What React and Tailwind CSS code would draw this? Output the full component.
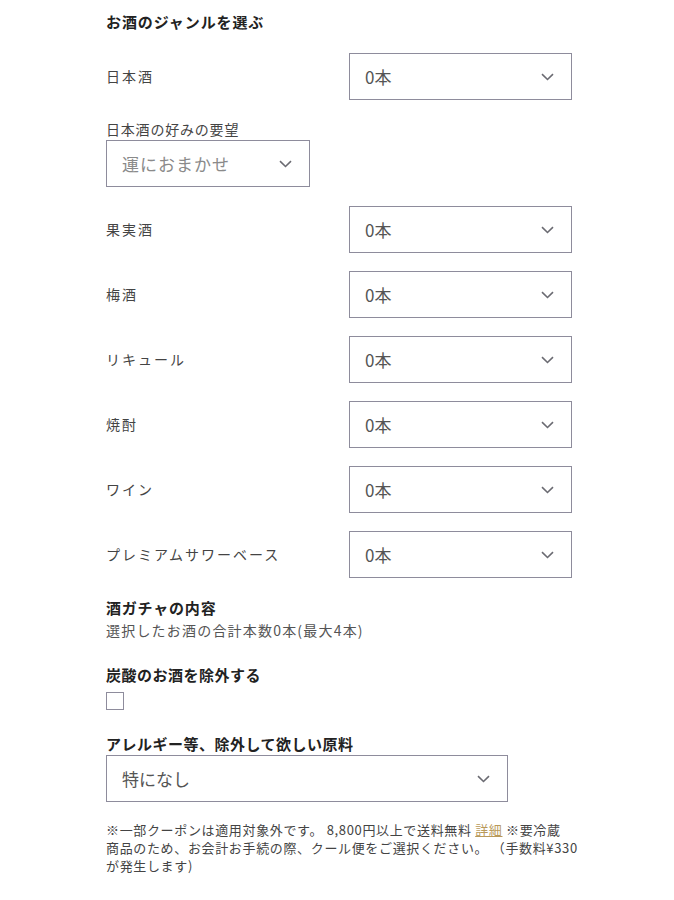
const font = { fontFamily: '"Noto Sans CJK JP", "Noto Sans", sans-serif' };

function Chevron() {
  return (
    <svg width="13" height="8" viewBox="0 0 13 8" fill="none" className="shrink-0">
      <path d="M1 1.2 L6.5 6.5 L12 1.2" stroke="#6b6b72" strokeWidth="1.6" />
    </svg>
  );
}

function FakeSelect({ value, width, muted }) {
  return (
    <div
      className={`flex h-[47px] items-center justify-between border border-[#8e8c9c] bg-white pl-[15px] pr-[17px] ${width}`}
    >
      <span className={`text-[17px] ${muted ? "text-[#8a8a8a] tracking-[1px]" : "text-[#555]"}`}>{value}</span>
      <Chevron />
    </div>
  );
}

const genres = ["果実酒", "梅酒", "リキュール", "焼酎", "ワイン", "プレミアムサワーベース"];

function GenreRow({ label }) {
  return (
    <div className="flex items-center justify-between">
      <span className="text-[14px] tracking-[2px] text-[#444]">{label}</span>
      <FakeSelect value="0本" width="w-[223px]" />
    </div>
  );
}

export default function App() {
  return (
    <div style={font} className="min-h-[900px] bg-white pl-[106px] pr-[102px] pt-[11px] text-[#333]">
      <h2 className="text-[15px] font-bold leading-[22px] tracking-[0.9px] text-[#222]">お酒のジャンルを選ぶ</h2>

      <div className="mt-[20px]">
        <GenreRow label="日本酒" />
      </div>

      <div className="mt-[19px]">
        <div className="text-[14px] leading-[21px] tracking-[0.8px] text-[#444]">日本酒の好みの要望</div>
        <FakeSelect value="運におまかせ" width="w-[204px]" muted />
      </div>

      <div className="mt-[19px] flex flex-col gap-[18px]">
        {genres.map((g) => (
          <GenreRow key={g} label={g} />
        ))}
      </div>

      <div className="mt-[19px]">
        <div className="text-[15px] font-bold leading-[22px] tracking-[0.8px] text-[#222]">酒ガチャの内容</div>
        <div className="text-[14px] leading-[22px] tracking-[1.2px] text-[#555]">選択したお酒の合計本数0本(最大4本)</div>
      </div>

      <div className="mt-[23px]">
        <div className="text-[15px] font-bold leading-[22px] tracking-[0.5px] text-[#222]">炭酸のお酒を除外する</div>
        <div className="mt-[6px] h-[18px] w-[18px] border border-[#8e8c9c] bg-white" />
      </div>

      <div className="mt-[23px]">
        <div className="text-[15px] font-bold leading-[22px] tracking-[0.5px] text-[#222]">アレルギー等、除外して欲しい原料</div>
        <FakeSelect value="特になし" width="w-[402px]" />
      </div>

      <p className="-mr-[10px] mt-[19px] text-[13px] leading-[18px] tracking-[0.65px] text-[#444]">
        <span className="block whitespace-nowrap">
          ※一部クーポンは適用対象外です。 8,800円以上で送料無料{" "}
          <a className="text-[#b8995a] underline" href="#">
            詳細
          </a>{" "}
          ※要冷蔵
        </span>
        <span className="block whitespace-nowrap">商品のため、お会計お手続の際、クール便をご選択ください。 （手数料¥330</span>
        <span className="block whitespace-nowrap">が発生します)</span>
      </p>
    </div>
  );
}
